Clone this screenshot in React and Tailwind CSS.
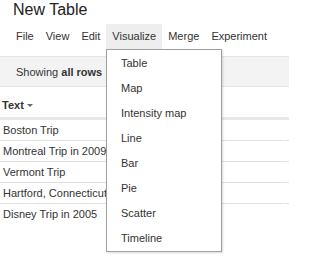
const menu = ['File', 'View', 'Edit', 'Visualize', 'Merge', 'Experiment'];
const rows = ['Boston Trip', 'Montreal Trip in 2009', 'Vermont Trip', 'Hartford, Connecticut', 'Disney Trip in 2005'];
const charts = ['Table', 'Map', 'Intensity map', 'Line', 'Bar', 'Pie', 'Scatter', 'Timeline'];

export default function App() {
  return (
    <div className="relative w-[289px] h-[276px] overflow-hidden bg-white text-[#222] font-['Liberation_Sans',Arial,sans-serif]">
      <h1 className="pl-[13px] text-[16px] leading-[20px]">New Table</h1>

      <div className="mt-[4px] flex h-[25px] pl-[10px] text-[11px] leading-[25px] text-[#333]">
        {menu.map((m) => (
          <div key={m} className={m === 'Visualize' ? 'px-[6px] bg-[#eeeeee]' : 'px-[6px]'}>
            {m}
          </div>
        ))}
      </div>

      <div className="mt-[7px] flex h-[31px] items-center border-y border-[#e5e5e5] bg-[#f3f3f3] pl-[16px] pt-[1px] text-[11px] text-[#333]">
        Showing&nbsp;<b>all rows</b>
      </div>

      <div className="flex h-[30px] items-start pl-[2px] pt-[12px] text-[11px] leading-[13px] font-bold text-[#333]">
        Text
        <span className="ml-[3px] mt-[5px] border-x-[3px] border-t-[3px] border-x-transparent border-t-[#666]" />
      </div>
      <div className="h-[3px] bg-[#e8e8e8]" />

      {rows.map((r, i) => (
        <div key={r} className="flex h-[21px] text-[11px] text-[#333]">
          <div className={i < rows.length - 1 ? 'flex w-[284px] items-center border-b border-[#e0e0e0] pl-[3px]' : 'flex w-[284px] items-center pl-[3px]'}>
            {r}
          </div>
          <div className={i < rows.length - 1 ? 'ml-[1px] flex-1 border-b border-[#e0e0e0]' : 'ml-[1px] flex-1'} />
        </div>
      ))}

      <div className="absolute left-[106px] top-[49px] w-[116px] border border-[#a0a0a0] bg-white pt-[1px] shadow-[1px_1px_2px_rgba(0,0,0,0.15)]">
        {charts.map((c) => (
          <div key={c} className="flex h-[25px] items-center pl-[14px] text-[11px] text-[#333]">
            {c}
          </div>
        ))}
      </div>
    </div>
  );
}
